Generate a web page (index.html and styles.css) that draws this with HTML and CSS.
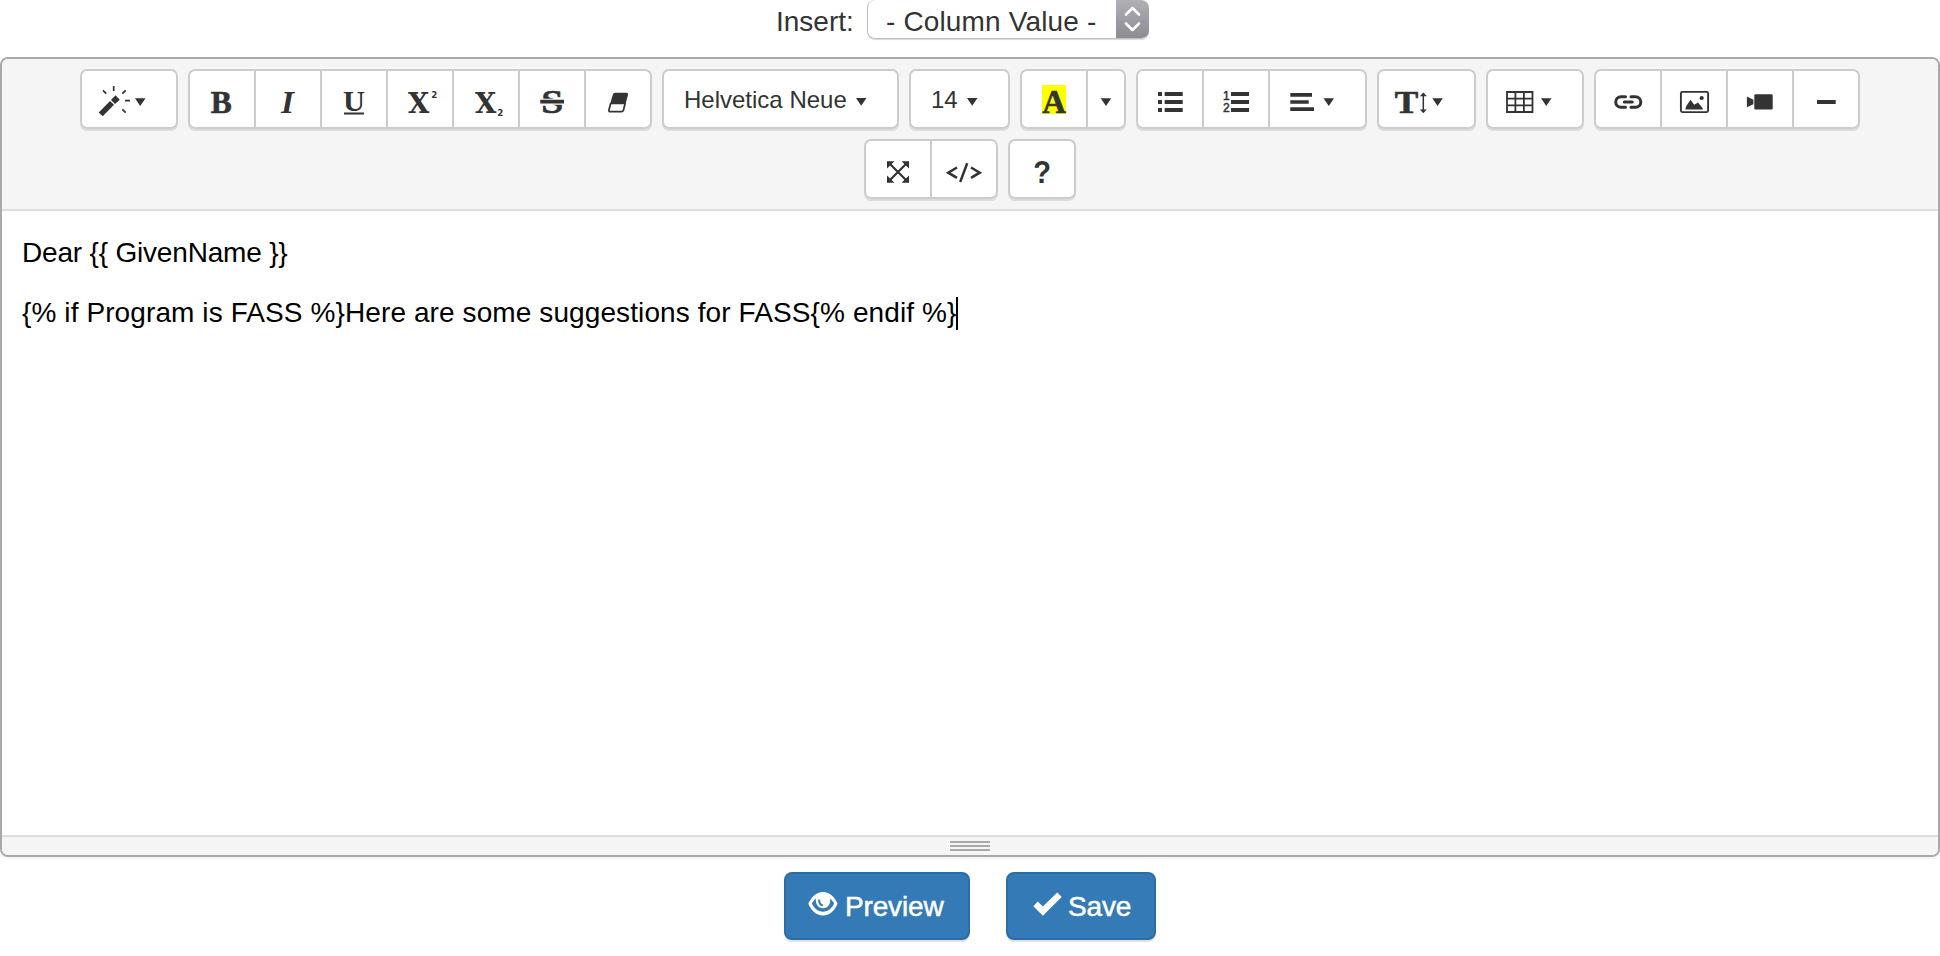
FILE: index.html
```html
<!DOCTYPE html>
<html lang="en">
<head>
<meta charset="utf-8">
<title>Message editor</title>
<link rel="stylesheet" href="styles.css">
</head>
<body>
<div class="insert-row">
  <span class="insert-label">Insert:</span>
  <div class="select">
    <span class="select-value">- Column Value -</span>
    <span class="select-arrows"><svg width="33" height="39" viewBox="0 0 33 39"><path d="M10 14.500l6.500-6.500 6.500 6.500M10 23.500l6.500 6.500 6.500-6.500" fill="none" stroke="#fff" stroke-width="2.600" stroke-linecap="round" stroke-linejoin="round"/></svg></span>
  </div>
</div>

<div class="editor">
  <div class="toolbar">
    <div class="toolbar-row">
      <div class="group">
        <div class="btn w98"><svg viewBox="82 71 94 56"><path d="M98.700 112.500L110 101l4 3.800-11.300 11.500zM115.500 95.300l4.300 4.400-4.800 4.300-4-4z"/><path class="line" d="M113.700 86v5M103 90.300l3.200 3.400M125.700 90.300l-3.400 3.400M125 100.700h5M122.300 109.300l3.400 3.400" stroke-width="1.700"/><path d="M135 98.300h10.500L140.200 106z"/></svg></div>
      </div>
      <div class="group">
        <div class="btn"><svg viewBox="190 71 64 56"><text class="serif heavy" x="210.700" y="112.500" font-size="32" textLength="21" lengthAdjust="spacingAndGlyphs">B</text></svg></div>
        <div class="btn"><svg viewBox="256 71 64 56"><text class="serif italic" x="281" y="112.700" font-size="32" textLength="13" lengthAdjust="spacingAndGlyphs">I</text></svg></div>
        <div class="btn"><svg viewBox="322 71 64 56"><text class="serif" x="343" y="110.800" font-size="29" textLength="22" lengthAdjust="spacingAndGlyphs">U</text><path d="M344 112.500h20v2h-20z"/></svg></div>
        <div class="btn"><svg viewBox="388 71 64 56"><text class="slab" x="408" y="112.700" font-size="27.500" textLength="21.300" lengthAdjust="spacingAndGlyphs">X</text><text class="script" x="431.300" y="97.700" font-size="8.700">2</text></svg></div>
        <div class="btn"><svg viewBox="454 71 64 56"><text class="slab" x="475" y="112.700" font-size="27.500" textLength="21.300" lengthAdjust="spacingAndGlyphs">X</text><text class="script" x="497.300" y="116" font-size="8.700">2</text></svg></div>
        <div class="btn"><svg viewBox="520 71 64 56"><text class="serif heavy" x="541.300" y="113.300" font-size="34" textLength="22" lengthAdjust="spacingAndGlyphs">S</text><path d="M540 98.700h24.500v6H540z" fill="#fff"/><path d="M540.300 99.800H564v3.700h-23.700z"/></svg></div>
        <div class="btn"><svg viewBox="586 71 64 56"><path d="M615 92.700h11.500q2 0 1.500 2l-2.500 9.500h-15.500l2.800-9.500q.600-2 2.200-2z"/><path class="line" d="M610.800 103l-1.800 6.800q-.500 1.900 1.200 1.900h11.300q1.500 0 2-1.700l1.700-7" stroke-width="1.700"/></svg></div>
      </div>
      <div class="group">
        <div class="btn w237 btn-text"><span>Helvetica Neue</span><svg class="caret" viewBox="0 0 11 8"><path d="M0 0h10.500L5.200 7.700z"/></svg></div>
      </div>
      <div class="group">
        <div class="btn w101 btn-text"><span>14</span><svg class="caret" viewBox="0 0 11 8"><path d="M0 0h10.500L5.200 7.700z"/></svg></div>
      </div>
      <div class="group">
        <div class="btn"><svg viewBox="1022 71 64 56"><path d="M1042 85h24v29h-24z" fill="#ff0"/><text class="serif heavy" x="1042.300" y="112.800" font-size="33" textLength="23.700" lengthAdjust="spacingAndGlyphs">A</text></svg></div>
        <div class="btn w40"><svg viewBox="1088 71 36 56"><path d="M1100.700 98.300h10.500L1106 106z"/></svg></div>
      </div>
      <div class="group">
        <div class="btn"><svg viewBox="1138 71 64 56"><path d="M1158 92h4v4h-4zM1158 100h4v4h-4zM1158 108h4v4h-4zM1164.700 92h18v4h-18zM1164.700 100h18v4h-18zM1164.700 108h18v4h-18z"/></svg></div>
        <div class="btn"><svg viewBox="1204 71 64 56"><text class="number" x="1223" y="100" font-size="12">1</text><text class="number" x="1223" y="112" font-size="12">2</text><path d="M1231 92h18v4h-18zM1231 100h18v4h-18zM1231 108h18v4h-18z"/></svg></div>
        <div class="btn w99"><svg viewBox="1270 71 95 56"><path d="M1290.300 93h21.700v3.700h-21.700zM1290.300 100.200h18.400v3.600h-18.400zM1290.300 107.200h23.700v3.700h-23.700zM1323.500 98.300h10.500l-5.200 7.700z"/></svg></div>
      </div>
      <div class="group">
        <div class="btn w99"><svg viewBox="1379 71 95 56"><text class="serif heavy" x="1394.700" y="112.800" font-size="30.500" textLength="23.500" lengthAdjust="spacingAndGlyphs">T</text><path class="line" d="M1423.300 94v18" stroke-width="1.500"/><path d="M1423.300 92.500l3.500 3.700h-7zM1423.300 113.200l3.500-3.700h-7zM1432.300 98.300h10.500l-5.200 7.700z"/></svg></div>
      </div>
      <div class="group">
        <div class="btn w98"><svg viewBox="1488 71 94 56"><path class="line" d="M1507 92h25.500v20H1507zM1515.400 92v20M1523.900 92v20M1507 98.600h25.500M1507 105.300h25.500" stroke-width="1.800"/><path d="M1541 98.300h10.500l-5.200 7.700z"/></svg></div>
      </div>
      <div class="group">
        <div class="btn"><svg viewBox="1596 71 64 56"><path class="line" d="M1625.500 96.700h-4.500a5.300 5.300 0 0 0 0 10.600h4.500M1631 96.700h4.500a5.300 5.300 0 0 1 0 10.600h-4.500M1624.300 102h8" stroke-width="3" stroke-linecap="round"/></svg></div>
        <div class="btn"><svg viewBox="1662 71 64 56"><rect class="line" x="1680.900" y="91.900" width="27.200" height="20.200" rx="1.500" stroke-width="1.900"/><path d="M1685.300 109.500l1-3.500 4.200-6.200 3.700 5 3.800-2.300 4.500 5.500.5 1.500z"/><circle cx="1701.700" cy="98" r="2.100"/></svg></div>
        <div class="btn"><svg viewBox="1728 71 64 56"><rect x="1754.300" y="94.300" width="18.400" height="15.200" rx="1.300"/><path d="M1746.900 96.500l6.500 3.300v4.400l-6.500 3.100z"/></svg></div>
        <div class="btn"><svg viewBox="1794 71 64 56"><path d="M1817 100h18.700v4H1817z"/></svg></div>
      </div>
    </div>
    <div class="toolbar-row">
      <div class="group">
        <div class="btn"><svg viewBox="866 141 64 56"><path class="line" d="M889.500 163.500l17 17M906.500 163.500l-17 17" stroke-width="2.200"/><path d="M887 161.300h7.500l-7.500 7.200zM909 161.300h-7.500l7.500 7.200zM887 182.700h7.500l-7.500-7.200zM909 182.700h-7.500l7.500-7.200z"/></svg></div>
        <div class="btn"><svg viewBox="932 141 64 56"><path class="line" d="M957 167.500l-8.800 5.200 8.800 5.200M967.200 163.300l-7 18.700M971 167.500l8.800 5.200-8.800 5.200" stroke-width="2.500"/></svg></div>
      </div>
      <div class="group">
        <div class="btn"><svg viewBox="1010 141 64 56"><text class="sans-bold" x="1033.300" y="183" font-size="31" textLength="17.800" lengthAdjust="spacingAndGlyphs">?</text></svg></div>
      </div>
    </div>
  </div>
  <div class="editable">
    <p class="greeting">Dear {{ GivenName }}</p>
    <p class="active-line"><span>{% if Program is FASS %}Here are some suggestions for FASS{% endif %}</span><i class="cursor"></i></p>
  </div>
  <div class="statusbar"><i></i><i></i><i></i></div>
</div>

<div class="actions">
  <div class="action preview">
    <svg width="30" height="24" viewBox="0 0 30 24"><path fill-rule="evenodd" d="M15 0C22 0 27 5.500 29.500 11.800 27 18 22 23.500 15 23.500S3 18 .3 11.800C3 5.500 8 0 15 0zM8 6.500C6 8 4.600 9.800 3.900 11.800 6.200 16.200 10 19.800 15 19.800s8.800-3.600 11.100-8C25.400 9.800 24 8 22 6.500c1.200 5-2 9.800-7 9.800S7 11.500 8 6.500z"/><path d="M11.200 7.500C11 11 12 13 14.800 13.300" fill="none" stroke="#337ab7" stroke-width="2"/></svg>
    <span>Preview</span>
  </div>
  <div class="action save">
    <svg width="29" height="24" viewBox="0 0 29 24"><path d="M.3 14.200l4.400-4.700 5.200 4.900L24.200.4l4.500 4.500L9.900 23.700z"/></svg>
    <span>Save</span>
  </div>
</div>
</body>
</html>
```
FILE: styles.css
```css
* { box-sizing: border-box; }

body {
  margin: 0;
  height: 956px;
  overflow: hidden;
  background: #fff;
  color: #333;
  font-family: "Liberation Sans", Arial, sans-serif;
  font-size: 28px;
}

svg { display: block; flex: none; }

/* Column picker */
.insert-row {
  display: flex;
  height: 57px;
  padding-left: 776px;
  line-height: 43px;
}
.insert-label { width: 91px; white-space: nowrap; }
.select {
  display: flex;
  width: 282px;
  height: 39px;
  border: 1px solid #bdbdbd;
  border-top: 0;
  border-right: 0;
  border-radius: 8px;
  box-shadow: 0 1px 1px rgba(0, 0, 0, .15);
  overflow: hidden;
}
.select-value { width: 248px; padding-left: 18px; white-space: nowrap; letter-spacing: .15px; }
.select-arrows { width: 33px; background: linear-gradient(#b0afb5, #8d8c92); }

/* Editor frame */
.editor {
  display: flex;
  flex-direction: column;
  height: 800px;
  border: 2px solid #a9a9a9;
  border-radius: 8px;
  box-shadow: 0 2px 2px rgba(0, 0, 0, .05);
  overflow: hidden;
}
.toolbar {
  display: flex;
  flex-direction: column;
  gap: 10px;
  height: 152px;
  padding-top: 10px;
  background: #f5f5f5;
  border-bottom: 2px solid #ddd;
}
.toolbar-row { display: flex; justify-content: center; gap: 10px; }
.group {
  display: flex;
  border-radius: 7px;
  box-shadow: 0 2px 0 #dcdcdc;
}
.btn {
  display: flex;
  width: 68px;
  height: 60px;
  background: #fff;
  border: 2px solid #ccc;
}
.btn + .btn { margin-left: -2px; }
.btn:first-child { border-top-left-radius: 7px; border-bottom-left-radius: 7px; }
.btn:last-child { border-top-right-radius: 7px; border-bottom-right-radius: 7px; }
.btn svg { width: 100%; height: 56px; fill: #333; }
.w40 { width: 40px; }
.w98 { width: 98px; }
.w99 { width: 99px; }
.w101 { width: 101px; }
.w237 { width: 237px; }

.btn-text { gap: 9px; padding-left: 20px; font-size: 24px; line-height: 56px; white-space: nowrap; }
.btn-text span { margin-top: 1px; }
.btn .caret { width: 11px; height: 8px; margin-top: 27px; }

.btn .line { fill: none; stroke: #333; }
.serif { font-family: "Liberation Serif", serif; font-weight: bold; }
.slab { font-family: "DejaVu Serif", serif; font-weight: bold; }
.sans-bold { font-family: "Liberation Sans", sans-serif; font-weight: bold; }
.script { font-family: "DejaVu Sans", sans-serif; font-weight: bold; }
.number { stroke: #333; stroke-width: .5px; }
.italic { font-style: italic; }
.heavy { stroke: #333; stroke-width: .6px; }

/* Message text */
.editable { flex: 1; padding: 22px 20px 0; color: #000; line-height: 40px; }
.editable p { margin: 0 0 20px; }
.editable .greeting { letter-spacing: -.19px; }
.active-line { display: flex; align-items: center; letter-spacing: .1px; }
.cursor { width: 2px; height: 33px; background: #000; }

.statusbar {
  display: flex;
  flex-direction: column;
  align-items: center;
  gap: 2px;
  height: 20px;
  padding-top: 4px;
  background: #f5f5f5;
  border-top: 2px solid #ddd;
}
.statusbar i { width: 40px; height: 2px; background: #a9a9a9; }

/* Action buttons */
.actions { display: flex; justify-content: center; gap: 36px; padding-top: 15px; }
.action {
  display: flex;
  height: 68px;
  background: #337ab7;
  border: 2px solid #2e6da4;
  border-radius: 8px;
  box-shadow: 0 2px 1px rgba(0, 0, 0, .12);
  color: #fff;
  line-height: 66px;
}
.action svg { margin-top: 18px; fill: #fff; }
.action span { -webkit-text-stroke: .5px #fff; letter-spacing: -.15px; }
.preview { width: 186px; padding-left: 22px; gap: 7px; }
.save { width: 150px; padding-left: 25px; gap: 6px; }
```
